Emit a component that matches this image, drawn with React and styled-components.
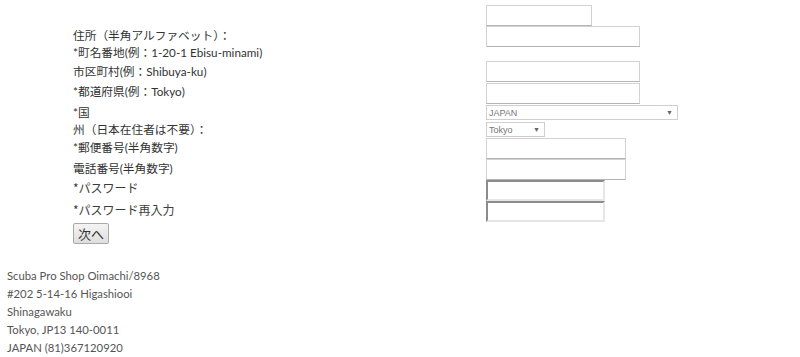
import React from 'react';
import styled, { createGlobalStyle } from 'styled-components';

const GlobalStyle = createGlobalStyle`
    body {
        margin: 0;
        background: #fff;
        font-family: "Lato", "Noto Sans CJK JP", sans-serif;
        color: #333;
    }
`;

const Page = styled.div`
    width: 800px;
    height: 357px;
    overflow: hidden;
`;

const Form = styled.form`
    display: flex;
    flex-direction: column;
    padding: 5px 0 0 73px;
`;

const Row = styled.div`
    display: flex;
    align-items: center;
    height: ${p => p.h}px;
`;

const Label = styled.div`
    width: 413px;
    font-family: ${p => p.thin ? '"Noto Sans CJK JP", sans-serif' : '"Lato", "Noto Sans CJK JP", sans-serif'};
    font-size: ${p => p.thin ? 12 : 11.7}px;
    line-height: 14px;
    color: ${p => p.thin ? '#3c3c3c' : '#333'};
    white-space: nowrap;
    position: relative;
    top: ${p => p.shift || 0}px;
`;

const TextInput = styled.input`
    box-sizing: border-box;
    width: ${p => p.w}px;
    height: 21px;
    margin: 0;
    padding: 0 3px;
    background: #fff;
    border: 1px solid #d2d2d2;
    border-bottom-color: #b4b4b4;
    outline: none;
`;

const PassInput = styled(TextInput)`
    width: 119px;
    border: 2px solid;
    border-color: #8c8c8c #e6e6e6 #e6e6e6 #8c8c8c;
`;

const SelectBox = styled.div`
    box-sizing: border-box;
    display: flex;
    align-items: center;
    justify-content: space-between;
    width: ${p => p.w}px;
    height: 15px;
    padding: 0 4px 0 2px;
    border: 1px solid #cfcfcf;
    background: #fff;
    font-family: "Liberation Sans", Arial, sans-serif;
    font-size: 9px;
    color: #777;
`;

const Arrow = styled.span`
    font-size: 7px;
    color: #666;
`;

const NextButton = styled.button`
    margin-top: 1px;
    width: 36px;
    height: 21px;
    padding: 0;
    font-family: "Noto Sans CJK JP", sans-serif;
    font-size: 13px;
    color: #333;
    border: 1px solid #a9a9a9;
    border-radius: 2px;
    background: linear-gradient(#f4f4f4, #dedede);
`;

const Footer = styled.address`
    font-style: normal;
    padding: 24px 0 0 7px;
    font-family: "Lato", sans-serif;
    font-size: 11.3px;
    line-height: 18px;
    color: #555;
`;

const App = () => {
    return (
        <Page>
            <GlobalStyle />
            <Form>
                <Row h={21}>
                    <Label />
                    <TextInput w={106} />
                </Row>
                <Row h={21}>
                    <Label shift={-2}>住所（半角アルファベット）：</Label>
                    <TextInput w={154} />
                </Row>
                <Row h={14}>
                    <Label shift={-2}>*町名番地(例：1-20-1 Ebisu-minami)</Label>
                </Row>
                <Row h={21}>
                    <Label shift={-1}>市区町村(例：Shibuya-ku)</Label>
                    <TextInput w={154} />
                </Row>
                <Row h={22}>
                    <Label shift={-2}>*都道府県(例：Tokyo)</Label>
                    <TextInput w={154} />
                </Row>
                <Row h={17}>
                    <Label shift={-1}>*国</Label>
                    <SelectBox w={192}>JAPAN<Arrow>▼</Arrow></SelectBox>
                </Row>
                <Row h={17}>
                    <Label shift={-1}>州（日本在住者は不要）：</Label>
                    <SelectBox w={59}>Tokyo<Arrow>▼</Arrow></SelectBox>
                </Row>
                <Row h={21}>
                    <Label shift={-2}>*郵便番号(半角数字)</Label>
                    <TextInput w={140} />
                </Row>
                <Row h={21}>
                    <Label shift={-2}>電話番号(半角数字)</Label>
                    <TextInput w={140} />
                </Row>
                <Row h={21}>
                    <Label thin shift={-3}>*パスワード</Label>
                    <PassInput type="password" />
                </Row>
                <Row h={21}>
                    <Label thin shift={-2}>*パスワード再入力</Label>
                    <PassInput type="password" />
                </Row>
                <Row h={21}>
                    <NextButton type="button">次へ</NextButton>
                </Row>
            </Form>
            <Footer>
                Scuba Pro Shop Oimachi/8968<br />
                #202 5-14-16 Higashiooi<br />
                Shinagawaku<br />
                Tokyo, JP13 140-0011<br />
                JAPAN (81)367120920
            </Footer>
        </Page>
    );
};

export default App;
